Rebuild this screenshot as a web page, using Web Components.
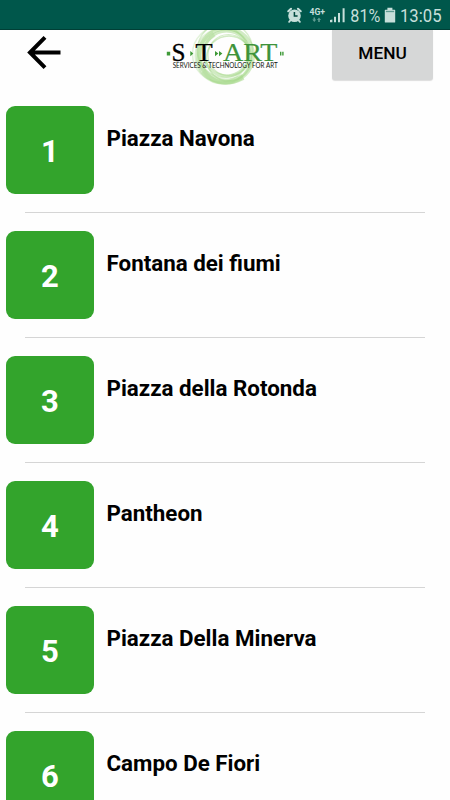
<!DOCTYPE html>
<html lang="it">
<head>
<meta charset="utf-8">
<title>START</title>
<style>
html,body{margin:0;height:100%;overflow:hidden;background:#fefefe}
body{font-family:Roboto,"Liberation Sans",sans-serif;color:#000}
</style>
</head>
<body>
<start-app></start-app>
<script>
const define = (name, html) => customElements.define(name, class extends HTMLElement {
  constructor() {
    super();
    this.attachShadow({mode: 'open'}).innerHTML = html;
  }
});

define('status-bar', `
<style>
:host{display:flex;height:30px;flex:none;background:#00574b;justify-content:flex-end;box-sizing:border-box;border-bottom:1px solid #003f36}
svg{display:block;flex:none;fill:#c6dfda;font-family:Roboto,sans-serif}
</style>
<svg width="170" height="29" viewBox="280 0 170 29">
  <circle cx="294.5" cy="15.8" r="6.3"/>
  <g stroke="#c6dfda" stroke-width="2.2" stroke-linecap="round" fill="none">
    <path d="M288.3 11.2l2.7-2.4M300.7 11.2l-2.7-2.4"/>
    <path d="M290.6 20.2l-1.5 1.6M298.4 20.2l1.5 1.6" stroke-width="1.8"/>
  </g>
  <path d="M294.4 12v4.1h3.2" stroke="#00473d" stroke-width="1.5" fill="none"/>
  <text x="309.5" y="14.5" font-size="8.8" font-weight="700" textLength="15.5" lengthAdjust="spacingAndGlyphs">4G+</text>
  <path fill="#5f9c91" d="M313.5 17.5h1.6v2h1.2l-2 2.6-2-2.6h1.2zM318.2 22.1h1.6v-2h1.2l-2-2.6-2 2.6h1.2z"/>
  <path d="M330 22.2v-2.2l2.4-.4v2.6zM334 16.8h2v5.400h-2zM338 13h2v9.200h-2zM342.600 8.200h2v14h-2z"/>
  <text x="350.3" y="22" font-size="18.6" textLength="30" lengthAdjust="spacingAndGlyphs">81%</text>
  <path d="M387.4 7.700h5v2h2.200q.6 0 .6.6v11.600q0 .6-.6.6h-9.200q-.6 0-.6-.6V10.300q0-.6.6-.6h2z"/>
  <path d="M385.9 11.500h8.200" stroke="#5f9c91" stroke-width="1.300"/>
  <text x="400" y="22" font-size="18.6" textLength="41.5" lengthAdjust="spacingAndGlyphs">13:05</text>
</svg>`);

define('back-button', `
<style>:host{display:block;width:34px;height:34px}svg{display:block}</style>
<svg width="34" height="34" viewBox="0 0 34 34" fill="none" stroke="#000" stroke-width="4"><path d="M33.5 16.500H5M18 1.400L3 16.500l15 15.100"/></svg>`);

define('brand-logo', `
<style>:host{display:block;width:124px;height:56px}svg{display:block;font-family:"Liberation Serif",serif}</style>
<svg width="124" height="56" viewBox="164 30 124 56">
  <g fill="none" stroke="#a3d888">
    <circle cx="226" cy="55.5" r="27" stroke-width="4" opacity=".5"/>
    <circle cx="220.5" cy="54" r="28" stroke-width="1.5" opacity=".3"/>
    <circle cx="223" cy="56" r="27.5" stroke-width="2" opacity=".35"/>
    <circle cx="225" cy="50" r="27.5" stroke-width="1.5" opacity=".4"/>
    <circle cx="226.5" cy="53.5" r="22.5" stroke-width="3" opacity=".5"/>
    <circle cx="229" cy="58.5" r="22.5" stroke-width="1.5" opacity=".5"/>
    <circle cx="228.5" cy="55" r="20.5" stroke-width="1.2" opacity=".45"/>
    <path d="M203 71Q219 89 243 77" stroke-width="6" opacity=".5"/>
    <path d="M214 34Q191 48 203 71" stroke-width="6" opacity=".35"/>
  </g>
  <path fill="#3f9a38" d="M166.8 51.8h3.4v3.6h-3.4zM190.3 51l3 2.6-3 2.6zM215 51l3.4 2.6-3.4 2.6zM219 51l3.4 2.6-3.4 2.6zM280 51.8h1.4v3.6H280zM282.2 51.8h1.400v3.600h-1.400z"/>
  <text x="171.6" y="61.3" font-size="25" fill="#000" stroke="#000" stroke-width=".3" textLength="14" lengthAdjust="spacingAndGlyphs">S</text>
  <text x="195.3" y="61.3" font-size="25" fill="#000" stroke="#000" stroke-width=".2" textLength="17.5" lengthAdjust="spacingAndGlyphs">T</text>
  <text x="223" y="61.3" font-size="25" fill="#3e933a" stroke="#3e933a" stroke-width=".2" textLength="54.5" lengthAdjust="spacingAndGlyphs">ART</text>
  <text x="172.7" y="68.2" font-family="Lato,sans-serif" font-size="6.9" fill="#101610" textLength="105" lengthAdjust="spacingAndGlyphs">SERVICES &amp; TECHNOLOGY FOR ART</text>
</svg>`);

define('menu-button', `
<style>
:host{display:block}
button{display:block;box-sizing:border-box;width:101px;height:50px;margin:0;border:0;border-radius:0 0 3px 3px;background:#d6d7d7;color:#000;font:500 17.3px/20px Roboto,sans-serif;padding:0 0 4px;box-shadow:0 1px 1px #0002}
</style>
<button><slot></slot></button>`);

define('app-header', `
<style>
:host{display:grid;grid-template-columns:164px 124px 1fr;height:64px;flex:none}
back-button{margin:6px 0 0 27px}
menu-button{justify-self:end;margin-right:17px}
</style>
<back-button></back-button><brand-logo></brand-logo><menu-button>MENU</menu-button>`);

define('number-tile', `
<style>
:host{display:flex;flex:none;width:88px;height:88px;border-radius:9px;background:#33a42c;color:#fff;align-items:center;justify-content:center;font:700 31px/36px Roboto,sans-serif;box-sizing:border-box;padding-top:3px}
</style>
<slot></slot>`);

define('place-row', `
<style>
:host{display:flex;flex-direction:column;height:125px;flex:none;box-sizing:border-box;padding-top:12px}
.line{display:flex;gap:12.5px;padding-left:6px}
.name{font:700 22.35px/26px Roboto,sans-serif;margin-top:19px;white-space:nowrap}
.rule{height:1px;background:#d5d5d5;margin:18px 25px 0}
</style>
<div class="line"><number-tile><slot name="number"></slot></number-tile><div class="name"><slot></slot></div></div>
<div class="rule"></div>`);

define('start-app', `
<style>:host{display:flex;flex-direction:column;height:800px;width:450px;overflow:hidden;background:#fefefe}</style>
<status-bar></status-bar><app-header></app-header>
${['Piazza Navona','Fontana dei fiumi','Piazza della Rotonda','Pantheon','Piazza Della Minerva','Campo De Fiori']
  .map((n, i) => `<place-row><span slot="number">${i + 1}</span>${n}</place-row>`).join('')}`);
</script>
</body>
</html>
